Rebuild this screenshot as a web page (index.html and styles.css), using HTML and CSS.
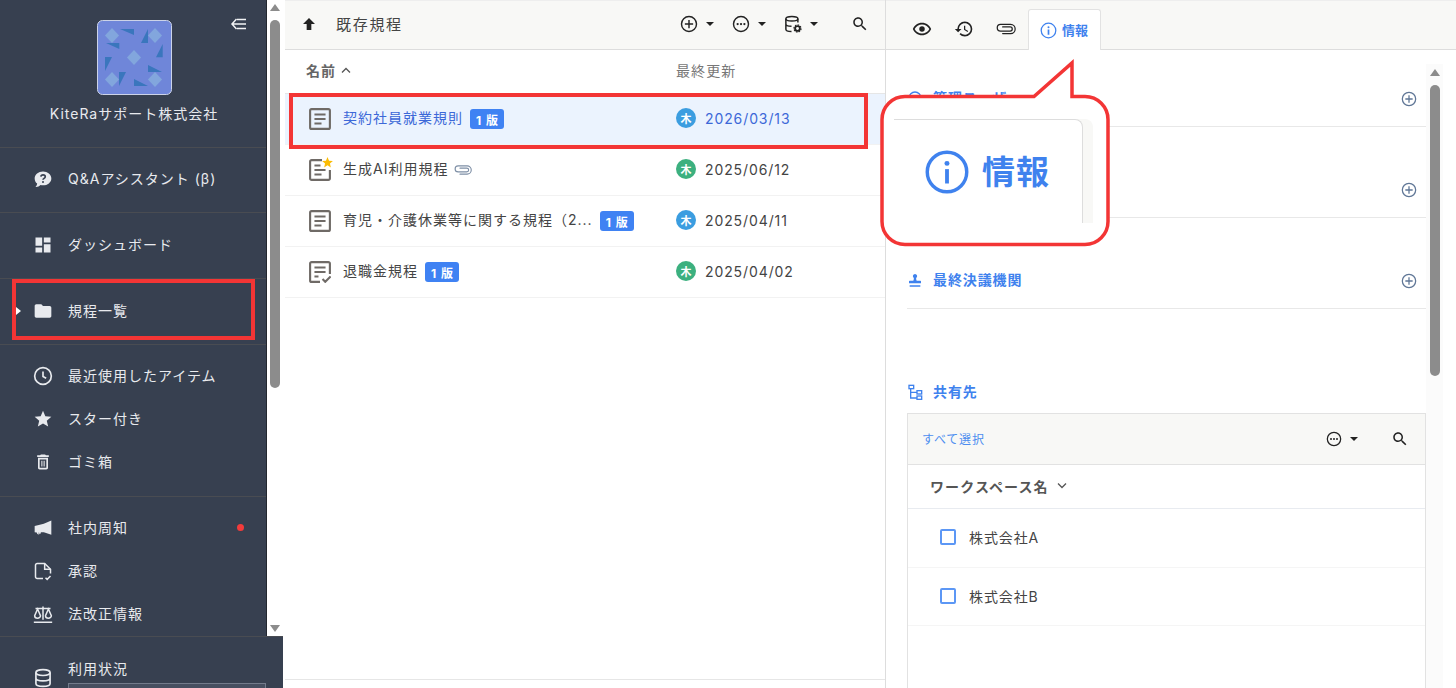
FILE: index.html
```html
<!DOCTYPE html>
<html lang="ja">
<head>
    <meta charset="UTF-8">
    <meta name="viewport" content="width=device-width, initial-scale=1.0">
    <title>規程一覧</title>
    <link rel="stylesheet" href="styles.css">
</head>
<body>
    <svg class="defs" aria-hidden="true">
        <symbol id="i-search" viewBox="0 0 24 24"><path fill="currentColor" d="M15.500 14h-.79l-.28-.27C15.410 12.590 16 11.110 16 9.500 16 5.910 13.090 3 9.500 3S3 5.910 3 9.500 5.910 16 9.500 16c1.610 0 3.090-.59 4.230-1.570l.27.28v.79l5 4.990L20.490 19l-4.990-5zm-6 0C7.010 14 5 11.990 5 9.500S7.010 5 9.500 5 14 7.010 14 9.500 11.990 14 9.500 14z"/></symbol>
        <symbol id="i-plus" viewBox="0 0 24 24"><g fill="none" stroke="currentColor" stroke-width="1.900"><circle cx="12" cy="12" r="10"/><path d="M12 6.500v11M6.500 12h11"/></g></symbol>
        <symbol id="i-more" viewBox="0 0 24 24"><circle cx="12" cy="12" r="10" fill="none" stroke="currentColor" stroke-width="1.900"/><g fill="currentColor"><circle cx="7.500" cy="12" r="1.500"/><circle cx="12" cy="12" r="1.500"/><circle cx="16.500" cy="12" r="1.500"/></g></symbol>
        <symbol id="i-clip" viewBox="0 0 24 24"><path fill="none" stroke="currentColor" stroke-width="1.500" stroke-linecap="round" d="M8 9.500H17a2.500 2.500 0 0 1 0 5H5.500a4 4 0 0 1 0-8H17.500a5.500 5.500 0 0 1 0 11H8"/></symbol>
        <symbol id="i-doc" viewBox="1.100 1.100 21.800 21.800"><g fill="none" stroke="currentColor" stroke-width="2.100"><rect x="2.200" y="2.200" width="19.600" height="19.600" rx="1.500"/><path d="M6.500 7.600h11M6.500 12h11M6.500 16.400h7"/></g></symbol>
        <symbol id="i-doc-star" viewBox="1.100 1.100 21.800 21.800"><g fill="none" stroke="currentColor" stroke-width="2.100"><path d="M14 2.200H3.700a1.500 1.500 0 0 0-1.500 1.500v16.600a1.500 1.500 0 0 0 1.500 1.500h16.600a1.500 1.500 0 0 0 1.500-1.500V12"/><path d="M6.500 7.600h6M6.500 12h11M6.500 16.400h7"/></g></symbol>
        <symbol id="i-doc-check" viewBox="1.100 1.100 21.800 21.800"><g fill="none" stroke="currentColor" stroke-width="2.100"><path d="M12 21.800H3.700a1.500 1.500 0 0 1-1.500-1.500V3.700a1.500 1.500 0 0 1 1.500-1.500h16.600a1.500 1.500 0 0 1 1.500 1.500V14"/><path d="M6.500 7.600h11M6.500 12h11M6.500 16.400h4"/><path d="M14.500 19l2.700 2.700 5.300-5.300"/></g></symbol>
    </svg>

    <div class="app">
        <aside class="side">
            <div class="side-main">
                <nav class="nav">
                    <div class="brand">
                        <svg class="logo" viewBox="0 0 75 75">
                            <rect x=".5" y=".5" width="74" height="74" rx="5" fill="#6f86d9" stroke="#ccd3e8"/>
                            <g fill="#82a6dd">
                                <path d="M15 8l7 7.500-7 7.500-7-7.500z"/>
                                <path d="M58 8l7 7.500-7 7.500-7-7.500z"/>
                                <path d="M37 30l7 7.500-7 7.500-7-7.500z"/>
                                <path d="M15 52l7 7.500-7 7.500-7-7.500z"/>
                                <path d="M58 52l7 7.500-7 7.500-7-7.500z"/>
                            </g>
                            <g fill="#3a76bd">
                                <path d="M23 9h14v6z"/>
                                <path d="M51 9l-7 14h7z"/>
                                <path d="M9 23h13.300v6z"/>
                                <path d="M65.700 24L59 37.300h6.700z"/>
                                <path d="M8 37h7L8 51z"/>
                                <path d="M51 45l14 7H51z"/>
                                <path d="M22 52h7l-7 14z"/>
                                <path d="M37 59l14 7H37z"/>
                            </g>
                        </svg>
                        <div class="brand-name">KiteRaサポート株式会社</div>
                        <svg class="collapse" viewBox="0 0 18 14"><path fill="none" stroke="currentColor" stroke-width="1.500" d="M6.500 2L2 7l4.500 5M2 7h14M7 2.500h9M7 11.500h9"/></svg>
                    </div>

                    <div class="nav-group nav-single">
                        <a class="nav-item">
                            <svg class="nav-icon" viewBox="0 0 24 24"><path fill="currentColor" d="M12 3c5.500 0 10 3.700 10 8.300s-4.500 8.300-10 8.300c-1 0-2-.1-2.900-.4C7.500 21 5 21.800 3 21.500c1-.9 1.800-2.300 2-4C3.200 16 2 13.800 2 11.300 2 6.700 6.500 3 12 3z"/><path fill="none" stroke="#374050" stroke-width="2" d="M9.400 9.200c.2-1.500 1.300-2.200 2.700-2.200 1.500 0 2.600.9 2.600 2.200 0 2-2.700 2-2.700 3.800"/><circle cx="12" cy="15.700" r="1.200" fill="#374050"/></svg>
                            <span>Q&amp;Aアシスタント (β)</span>
                        </a>
                    </div>
                    <div class="nav-group nav-single">
                        <a class="nav-item">
                            <svg class="nav-icon" viewBox="0 0 24 24"><path fill="currentColor" d="M3 13h8V3H3v10zm0 8h8v-6H3v6zm10 0h8V11h-8v10zm0-18v6h8V3h-8z"/></svg>
                            <span>ダッシュボード</span>
                        </a>
                    </div>
                    <div class="nav-group nav-single nav-current">
                        <a class="nav-item">
                            <svg class="nav-icon" viewBox="0 0 24 24"><path fill="currentColor" d="M10 4H4c-1.100 0-2 .9-2 2v12c0 1.100.9 2 2 2h16c1.100 0 2-.9 2-2V8c0-1.100-.9-2-2-2h-8l-2-2z"/></svg>
                            <span>規程一覧</span>
                        </a>
                        <div class="mark mark-nav"></div>
                    </div>
                    <div class="nav-group nav-multi">
                        <a class="nav-item">
                            <svg class="nav-icon" viewBox="0 0 24 24"><g fill="none" stroke="currentColor" stroke-width="2"><circle cx="12" cy="12" r="10"/><path d="M12 6.500V12.500l3.800 2.200"/></g></svg>
                            <span>最近使用したアイテム</span>
                        </a>
                        <a class="nav-item">
                            <svg class="nav-icon" viewBox="0 0 24 24"><path fill="currentColor" d="M12 17.270L18.180 21l-1.640-7.030L22 9.240l-7.190-.61L12 2 9.190 8.630 2 9.240l5.460 4.730L5.820 21z"/></svg>
                            <span>スター付き</span>
                        </a>
                        <a class="nav-item">
                            <svg class="nav-icon" viewBox="0 0 24 24"><path fill="currentColor" d="M6 19c0 1.100.9 2 2 2h8c1.100 0 2-.9 2-2V7H6v12zM8 9h8v10H8V9zm7.500-5l-1-1h-5l-1 1H5v2h14V4z"/><path fill="currentColor" d="M10 10.500h1.300v7H10zM12.700 10.500H14v7h-1.300z"/></svg>
                            <span>ゴミ箱</span>
                        </a>
                    </div>
                    <div class="nav-group nav-multi nav-last">
                        <a class="nav-item">
                            <svg class="nav-icon" viewBox="0 0 24 24"><path fill="currentColor" d="M22 3v17l-9-3H9.500a2.500 2.500 0 0 1-5 .3L2 17V9.500L13 7zM6 17.800a1.300 1.300 0 0 0 2.300.3z"/></svg>
                            <span>社内周知</span>
                            <i class="dot"></i>
                        </a>
                        <a class="nav-item">
                            <svg class="nav-icon" viewBox="0 0 24 24"><g fill="none" stroke="currentColor" stroke-width="1.800"><path d="M12 21H5a2 2 0 0 1-2-2V5a2 2 0 0 1 2-2h9l7 7v5"/><path d="M14 3v7h7"/><path d="M15 20l2 2 4-4"/></g></svg>
                            <span>承認</span>
                        </a>
                        <a class="nav-item">
                            <svg class="nav-icon" viewBox="0 0 24 24"><g fill="none" stroke="currentColor" stroke-width="1.800"><path d="M1 22h22M12 3v16M3 5.500h18"/><path d="M5.500 6L2 14a3.500 3 0 0 0 7 0zM18.500 6L15 14a3.500 3 0 0 0 7 0z"/></g></svg>
                            <span>法改正情報</span>
                        </a>
                    </div>
                </nav>
                <div class="side-scroll">
                    <span class="arrow-up"></span>
                    <span class="side-thumb"></span>
                    <span class="arrow-down"></span>
                </div>
            </div>
            <div class="side-foot">
                <svg class="nav-icon foot-icon" viewBox="0 0 24 24"><g fill="none" stroke="currentColor" stroke-width="2"><ellipse cx="12" cy="5.500" rx="8.500" ry="3.500"/><path d="M3.500 5.500v13c0 2 3.800 3.500 8.500 3.500s8.500-1.500 8.500-3.500v-13M3.500 12c0 2 3.800 3.500 8.500 3.500s8.500-1.500 8.500-3.500"/></g></svg>
                <div class="foot-body">
                    <span>利用状況</span>
                    <div class="usage-box"></div>
                </div>
            </div>
        </aside>

        <main class="list">
            <div class="toolbar">
                <svg class="up-icon" viewBox="0 0 24 24"><path fill="currentColor" d="M12 3l9 9h-5.500v9h-7v-9H3z"/></svg>
                <h1 class="folder-title">既存規程</h1>
                <div class="tool-group">
                    <button class="tool"><svg class="tool-icon"><use href="#i-plus"/></svg><i class="caret"></i></button>
                    <button class="tool"><svg class="tool-icon"><use href="#i-more"/></svg><i class="caret"></i></button>
                    <button class="tool">
                        <svg class="tool-icon" viewBox="0 0 24 24"><g fill="none" stroke="currentColor" stroke-width="2"><ellipse cx="10.500" cy="5" rx="8" ry="3"/><path d="M2.500 5v14c0 1.600 3 3 7.500 3M18.500 5v5M2.500 12c0 1.600 3.200 3 7.500 3"/></g><circle cx="18" cy="18" r="3.200" fill="none" stroke="currentColor" stroke-width="2.500"/><circle cx="18" cy="18" r="4.800" fill="none" stroke="currentColor" stroke-width="1.500" stroke-dasharray="2 1.700"/></svg>
                        <i class="caret"></i>
                    </button>
                    <button class="tool tool-search"><svg class="tool-icon"><use href="#i-search"/></svg></button>
                </div>
            </div>

            <div class="list-head">
                <div class="head-name">名前 <svg class="sort-icon" viewBox="0 0 10 6"><path fill="none" stroke="currentColor" stroke-width="1.300" d="M1 5.500l4-4 4 4"/></svg></div>
                <div class="head-date">最終更新</div>
            </div>

            <div class="list-row selected">
                <div class="cell-name">
                    <svg class="doc-icon"><use href="#i-doc"/></svg>
                    <span class="doc-name">契約社員就業規則</span>
                    <span class="badge">1 版</span>
                </div>
                <div class="cell-date"><span class="avatar">木</span>2026/03/13</div>
                <div class="mark mark-row"></div>
            </div>
            <div class="list-row">
                <div class="cell-name">
                    <span class="doc-wrap">
                        <svg class="doc-icon"><use href="#i-doc-star"/></svg>
                        <svg class="doc-star" viewBox="0 0 24 24"><path fill="#fbbc05" d="M12 17.270L18.180 21l-1.640-7.030L22 9.240l-7.190-.61L12 2 9.190 8.630 2 9.240l5.460 4.730L5.820 21z"/></svg>
                    </span>
                    <span class="doc-name">生成AI利用規程</span>
                    <svg class="row-clip"><use href="#i-clip"/></svg>
                </div>
                <div class="cell-date"><span class="avatar green">木</span>2025/06/12</div>
            </div>
            <div class="list-row">
                <div class="cell-name">
                    <svg class="doc-icon"><use href="#i-doc"/></svg>
                    <span class="doc-name">育児・介護休業等に関する規程（2...</span>
                    <span class="badge">1 版</span>
                </div>
                <div class="cell-date"><span class="avatar">木</span>2025/04/11</div>
            </div>
            <div class="list-row">
                <div class="cell-name">
                    <svg class="doc-icon"><use href="#i-doc-check"/></svg>
                    <span class="doc-name">退職金規程</span>
                    <span class="badge">1 版</span>
                </div>
                <div class="cell-date"><span class="avatar green">木</span>2025/04/02</div>
            </div>
            <div class="list-foot"></div>
        </main>

        <section class="detail">
            <div class="tabs">
                <button class="tab"><svg class="tab-icon" viewBox="0 0 24 24"><path fill="currentColor" d="M12 6.500c3.790 0 7.170 2.130 8.820 5.500-1.650 3.370-5.020 5.500-8.820 5.500S4.830 15.370 3.180 12C4.830 8.630 8.210 6.500 12 6.500m0-2C7 4.500 2.730 7.610 1 12c1.730 4.390 6 7.500 11 7.500s9.270-3.110 11-7.500c-1.730-4.390-6-7.500-11-7.500z"/><circle cx="12" cy="12" r="3.300" fill="currentColor"/></svg></button>
                <button class="tab"><svg class="tab-icon" viewBox="0 0 24 24"><path fill="currentColor" d="M13 3a9 9 0 0 0-9 9H1l3.890 3.890.07.140L9 12H6c0-3.870 3.130-7 7-7s7 3.130 7 7-3.130 7-7 7c-1.930 0-3.680-.79-4.940-2.060l-1.420 1.420A8.954 8.954 0 0 0 13 21a9 9 0 0 0 0-18zm-1 5v5l4.280 2.540.72-1.210-3.500-2.080V8H12z"/></svg></button>
                <button class="tab"><svg class="tab-icon"><use href="#i-clip"/></svg></button>
                <button class="tab tab-active">
                    <svg class="info-icon" viewBox="0 0 24 24"><circle cx="12" cy="12" r="10.300" fill="none" stroke="currentColor" stroke-width="1.800"/><circle cx="12" cy="7.500" r="1.400" fill="currentColor"/><path fill="currentColor" d="M10.800 10.500h2.400v7.500h-2.400z"/></svg>
                    <span>情報</span>
                </button>
            </div>

            <div class="detail-body">
                <div class="detail-main">
                    <div class="info-sec">
                        <div class="sec-title">
                            <svg class="sec-icon" viewBox="0 0 24 24"><circle cx="12" cy="12" r="9" fill="none" stroke="currentColor" stroke-width="2"/></svg>
                            <span>管理ユーザー</span>
                        </div>
                        <svg class="sec-add"><use href="#i-plus"/></svg>
                    </div>
                    <div class="info-sec">
                        <div class="sec-title"></div>
                        <svg class="sec-add"><use href="#i-plus"/></svg>
                    </div>
                    <div class="info-sec">
                        <div class="sec-title">
                            <svg class="sec-icon" viewBox="0 0 24 24"><path fill="currentColor" d="M12 3a3.300 3.300 0 0 1 1.800 6c-.3 1.500.2 3 .7 4H20a1 1 0 0 1 1 1v3H3v-3a1 1 0 0 1 1-1h5.500c.5-1 1-2.500.7-4A3.300 3.300 0 0 1 12 3zM4 20h16v2H4z"/></svg>
                            <span>最終決議機関</span>
                        </div>
                        <svg class="sec-add"><use href="#i-plus"/></svg>
                    </div>

                    <div class="sec-title share-title">
                        <svg class="sec-icon" viewBox="0 0 24 24"><g fill="none" stroke="currentColor" stroke-width="2"><rect x="3" y="2" width="7" height="5"/><rect x="15" y="10" width="7" height="5"/><rect x="15" y="18" width="7" height="5"/><path d="M5.500 7v14H15M5.500 12.500H15"/></g></svg>
                        <span>共有先</span>
                    </div>

                    <div class="share-table">
                        <div class="share-tools">
                            <a class="select-all">すべて選択</a>
                            <button class="tool"><svg class="more-icon"><use href="#i-more"/></svg><i class="caret"></i></button>
                            <button class="tool share-search"><svg class="tool-icon"><use href="#i-search"/></svg></button>
                        </div>
                        <div class="share-head">ワークスペース名 <svg class="sort-icon" viewBox="0 0 10 6"><path fill="none" stroke="currentColor" stroke-width="1.300" d="M1 .5l4 4 4-4"/></svg></div>
                        <div class="share-row"><i class="check"></i>株式会社A</div>
                        <div class="share-row"><i class="check"></i>株式会社B</div>
                    </div>
                </div>
                <div class="detail-scroll">
                    <span class="arrow-up"></span>
                    <span class="detail-thumb"></span>
                </div>
            </div>

            <!-- 吹き出し -->
            <div class="callout">
                <svg class="callout-shape" viewBox="0 0 232 190"><path fill="#fff" stroke="#f33535" stroke-width="3.500" d="M26 38.500H155L193 5V38.500H206a23 23 0 0 1 23 23V163.500a23 23 0 0 1-23 23H26a23 23 0 0 1-23-23V61.500a23 23 0 0 1 23-23z"/></svg>
                <div class="callout-tab">
                    <svg class="callout-icon" viewBox="0 0 24 24"><circle cx="12" cy="12" r="10.300" fill="none" stroke="currentColor" stroke-width="1.800"/><circle cx="12" cy="7.500" r="1.300" fill="currentColor"/><path fill="currentColor" d="M11 10.500h2v7.500h-2z"/></svg>
                    <span>情報</span>
                </div>
            </div>
        </section>
    </div>
</body>
</html>
```

FILE: styles.css
```css
* {
    margin: 0;
    padding: 0;
    box-sizing: border-box;
    font-family: Inter, "Noto Sans CJK JP", sans-serif;
}

body {
    background-color: white;
    height: 100vh;
    overflow: hidden;
}

button {
    background: none;
    border: none;
    cursor: pointer;
}

.defs {
    display: none;
}

.app {
    display: flex;
    height: 100vh;
}

/* サイドバー */
.side {
    width: 283px;
    flex-shrink: 0;
    display: flex;
    flex-direction: column;
}

.side-main {
    height: 636px;
    display: flex;
}

.nav {
    width: 267px;
    background-color: #374050;
    border-right: 1px solid #23272f;
    color: #e8eaee;
}

.brand {
    position: relative;
    height: 148px;
    padding-top: 20px;
    padding-left: 2px;
    display: flex;
    flex-direction: column;
    align-items: center;
    border-bottom: 1px solid #494c52;
}

.logo {
    width: 75px;
    height: 75px;
}

.brand-name {
    margin-top: 7px;
    font-size: 14px;
    letter-spacing: 1px;
    line-height: 24px;
}

.collapse {
    position: absolute;
    left: 230px;
    top: 17px;
    width: 18px;
    height: 14px;
    color: #f2f3f5;
}

.nav-group {
    border-bottom: 1px solid #494c52;
}

.nav-single {
    height: 66px;
    display: flex;
    align-items: center;
    position: relative;
}

.nav-single:nth-child(2) {
    height: 65px;
}

.nav-multi {
    height: 152px;
    padding-top: 10px;
}

.nav-last {
    height: 140px;
    border-bottom: none;
}

.nav-item {
    height: 43px;
    width: 100%;
    display: flex;
    align-items: center;
    gap: 15px;
    padding-left: 33px;
    padding-bottom: 2px;
    font-size: 14px;
    letter-spacing: 1px;
}

.nav-item span {
    margin-bottom: 2px;
}

.nav-icon {
    width: 20px;
    height: 20px;
    flex-shrink: 0;
}

.nav-current::before {
    content: "";
    position: absolute;
    left: 16px;
    top: 28px;
    border-left: 5px solid white;
    border-top: 4px solid transparent;
    border-bottom: 4px solid transparent;
}

.dot {
    width: 7px;
    height: 7px;
    border-radius: 50%;
    background-color: #f33b3b;
    margin-left: auto;
    margin-right: 22px;
}

/* 赤枠 */
.mark {
    position: absolute;
    border: 4px solid #f33535;
    z-index: 5;
    pointer-events: none;
}

.mark-nav {
    left: 12px;
    top: 0;
    width: 243px;
    height: 61px;
}

.mark-row {
    left: 4px;
    top: -1px;
    width: 579px;
    height: 56px;
}

.side-scroll {
    position: relative;
    width: 16px;
    background-color: white;
}

.side-thumb {
    position: absolute;
    left: 3px;
    top: 20px;
    width: 10px;
    height: 368px;
    border-radius: 5px;
    background-color: #8c8c8c;
}

.arrow-up,
.arrow-down {
    position: absolute;
    left: 3px;
    border-left: 5px solid transparent;
    border-right: 5px solid transparent;
}

.arrow-up {
    top: 4px;
    border-bottom: 7px solid #8c8c8c;
}

.arrow-down {
    top: 625px;
    border-top: 7px solid #8c8c8c;
}

.side-foot {
    flex: 1;
    background-color: #374050;
    border-top: 1px solid #494c52;
    display: flex;
    padding: 24px 0 0 33px;
    gap: 15px;
    color: #e8eaee;
}

.foot-icon {
    margin-top: 7px;
}

.foot-body {
    margin-top: -2px;
    font-size: 14px;
    letter-spacing: 1px;
    line-height: 20px;
}

.usage-box {
    width: 198px;
    height: 20px;
    margin-top: 4px;
    background-color: #474f60;
    border: 1px solid #737b8b;
}

/* 一覧 */
.list {
    width: 601px;
    margin-left: 2px;
    flex-shrink: 0;
    border-right: 1px solid #ddd;
    display: flex;
    flex-direction: column;
}

.toolbar {
    height: 50px;
    display: flex;
    align-items: center;
    padding-left: 16px;
    padding-bottom: 2px;
    background-color: #f8f8f6;
    border-top: 1px solid #eee;
    border-bottom: 1px solid #ddd;
}

.up-icon {
    width: 16px;
    height: 16px;
    color: #222;
}

.folder-title {
    margin-left: 19px;
    margin-bottom: 2px;
    font-size: 15px;
    font-weight: 400;
    letter-spacing: 1.700px;
    color: #444;
}

.tool-group {
    margin-left: auto;
    margin-right: 16px;
    display: flex;
    align-items: center;
    gap: 18px;
}

.tool {
    display: flex;
    align-items: center;
    gap: 8px;
    color: #222;
}

.tool-icon {
    width: 18px;
    height: 18px;
}

.tool-search {
    margin-left: 15px;
}

.caret {
    width: 0;
    height: 0;
    border-left: 4px solid transparent;
    border-right: 4px solid transparent;
    border-top: 4px solid #222;
}

.list-head {
    height: 44px;
    padding-bottom: 3px;
    display: grid;
    grid-template-columns: 391px 1fr;
    align-items: center;
    border-bottom: 1px solid #e6e6e6;
    font-size: 14px;
    letter-spacing: 1.100px;
}

.head-name {
    padding-left: 21px;
    font-weight: 700;
    color: #666;
    display: flex;
    align-items: center;
    gap: 5px;
}

.head-date {
    color: #777;
}

.sort-icon {
    width: 10px;
    height: 6px;
    color: #555;
}

.list-row {
    position: relative;
    height: 51px;
    display: grid;
    grid-template-columns: 391px 1fr;
    align-items: center;
    border-bottom: 1px solid #f2f2f2;
    font-size: 14px;
    letter-spacing: 1px;
    color: #444;
}

.list-row.selected {
    background-color: #ebf3fe;
    color: #3c68d8;
}

.cell-name {
    display: flex;
    align-items: center;
    padding-left: 24px;
}

.doc-icon {
    width: 22px;
    height: 22px;
    color: #6f6a66;
}

.doc-wrap {
    position: relative;
    display: flex;
}

.doc-star {
    position: absolute;
    right: -3px;
    top: -3px;
    width: 13px;
    height: 13px;
}

.doc-name {
    margin-left: 12px;
    margin-bottom: 4px;
}

.badge {
    margin-left: 7px;
    height: 20px;
    padding: 0 5px 0 6px;
    display: flex;
    align-items: center;
    border-radius: 3px;
    background-color: #3f82f3;
    color: white;
    font-size: 12px;
    font-weight: 700;
    letter-spacing: 1px;
}

.row-clip {
    width: 18px;
    height: 18px;
    margin-left: 6px;
    margin-bottom: 1px;
    color: #7d8ea5;
}

.cell-date {
    display: flex;
    align-items: center;
    gap: 9px;
    padding-bottom: 2px;
    letter-spacing: .9px;
}

.avatar {
    width: 20px;
    height: 20px;
    border-radius: 50%;
    background-color: #3b9de0;
    color: white;
    font-size: 11px;
    font-weight: 700;
    letter-spacing: 0;
    display: flex;
    align-items: center;
    justify-content: center;
}

.avatar.green {
    background-color: #3cb07f;
}

.list-foot {
    margin-top: auto;
    height: 9px;
    border-top: 1px solid #e6e6e6;
}

/* 詳細 */
.detail {
    position: relative;
    flex: 1;
    display: flex;
    flex-direction: column;
    min-width: 0;
}

.tabs {
    height: 50px;
    display: flex;
    align-items: flex-end;
    padding-left: 15px;
    background-color: #f8f8f6;
    border-top: 1px solid #eee;
    border-bottom: 1px solid #ddd;
}

.tab {
    width: 42px;
    height: 40px;
    display: flex;
    align-items: center;
    justify-content: center;
    color: #222;
}

.tab-icon {
    width: 20px;
    height: 20px;
}

.tab-active {
    width: 73px;
    height: 41px;
    margin-left: 1px;
    margin-bottom: -1px;
    padding-right: 1px;
    gap: 5px;
    background-color: white;
    border: 1px solid #e2e2e2;
    border-bottom: none;
    border-radius: 3px 3px 0 0;
    color: #3f82ee;
    font-size: 13px;
    font-weight: 700;
}

.tab-active span {
    margin-bottom: 2px;
}

.info-icon {
    width: 17px;
    height: 17px;
}

.detail-body {
    flex: 1;
    min-height: 0;
    display: flex;
    padding-left: 21px;
}

.detail-main {
    width: 519px;
    display: flex;
    flex-direction: column;
}

.info-sec {
    height: 91px;
    padding-bottom: 18px;
    display: flex;
    align-items: flex-end;
    justify-content: space-between;
    border-bottom: 1px solid #e8e8e8;
}

.info-sec:first-child {
    height: 77px;
}

.sec-title {
    height: 20px;
    display: flex;
    align-items: center;
    gap: 10px;
    font-size: 14px;
    font-weight: 700;
    letter-spacing: .9px;
    color: #3f82ee;
}

.sec-title span {
    margin-bottom: 2px;
}

.sec-icon {
    width: 16px;
    height: 16px;
}

.sec-add {
    width: 16px;
    height: 16px;
    margin-right: 9px;
    margin-bottom: 1px;
    color: #5f7696;
}

.share-title {
    margin-top: 73px;
}

.share-table {
    flex: 1;
    margin-top: 11px;
    border: 1px solid #e2e2e2;
    border-bottom: none;
}

.share-tools {
    height: 51px;
    display: flex;
    align-items: center;
    padding-left: 14px;
    background-color: #f8f8f6;
    border-bottom: 1px solid #e2e2e2;
}

.select-all {
    margin-right: auto;
    margin-bottom: 2px;
    font-size: 12px;
    letter-spacing: .8px;
    color: #4d8ef0;
}

.more-icon {
    width: 16px;
    height: 16px;
}

.share-search {
    margin: 0 16px 0 33px;
}

.share-head {
    height: 44px;
    padding-bottom: 2px;
    display: flex;
    align-items: center;
    gap: 8px;
    padding-left: 22px;
    border-bottom: 1px solid #e8ebf0;
    font-size: 14px;
    font-weight: 700;
    letter-spacing: 1.100px;
    color: #555;
}

.share-row {
    height: 59px;
    padding-bottom: 2px;
    display: flex;
    align-items: center;
    gap: 13px;
    padding-left: 32px;
    border-bottom: 1px solid #f5f5f5;
    font-size: 14px;
    letter-spacing: .9px;
    color: #444;
}

.share-row + .share-row {
    height: 58px;
}

.check {
    width: 16px;
    height: 16px;
    border: 2px solid #5c97f5;
    border-radius: 2px;
}

.detail-scroll {
    position: relative;
    width: 17px;
    margin-top: 14px;
    background-color: #fbfbfb;
}

.detail-scroll .arrow-up {
    left: 4px;
    top: 5px;
}

.detail-thumb {
    position: absolute;
    left: 4px;
    top: 21px;
    width: 10px;
    height: 291px;
    border-radius: 5px;
    background-color: #8c8c8c;
}

/* 吹き出し */
.callout {
    position: absolute;
    left: -7px;
    top: 58px;
    width: 232px;
    height: 190px;
    z-index: 6;
}

.callout-shape {
    position: absolute;
    left: 0;
    top: 0;
    width: 232px;
    height: 190px;
}

.callout-tab {
    position: absolute;
    left: 15px;
    top: 61px;
    width: 189px;
    height: 104px;
    padding-left: 30px;
    display: flex;
    align-items: center;
    gap: 12px;
    background-color: white;
    border: 1px solid #ddd;
    border-width: 1px 1px 0 0;
    border-radius: 0 8px 0 0;
    box-shadow: 10px 0 0 #f8f8f6;
    color: #3f82ee;
    font-size: 33px;
    font-weight: 700;
    letter-spacing: 1px;
}

.callout-tab span {
    margin-bottom: 3px;
}

.callout-icon {
    width: 46px;
    height: 46px;
    flex-shrink: 0;
}
```
